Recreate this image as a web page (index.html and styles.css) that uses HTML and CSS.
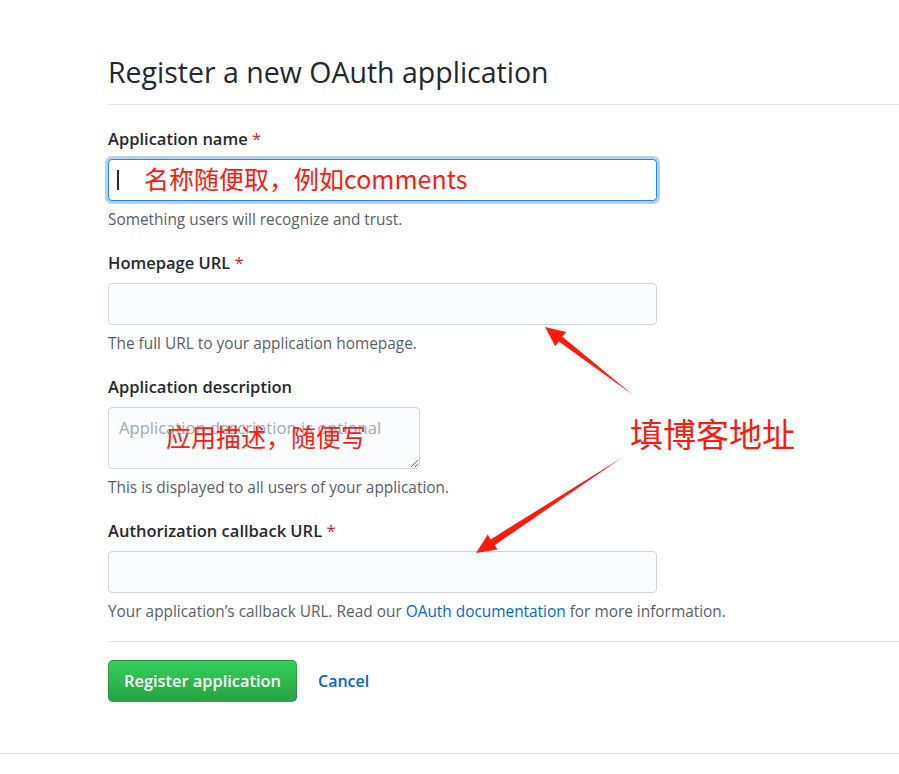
FILE: index.html
```html
<!DOCTYPE html>
<html lang="en">
<head>
<meta charset="utf-8">
<title>Register a new OAuth application</title>
<link rel="stylesheet" href="styles.css">
</head>
<body>
<div class="page">
  <main class="main">
    <div class="subhead">
      <h2 class="subhead-heading">Register a new OAuth application</h2>
    </div>
    <form class="form">
      <div class="form-group">
        <label class="label">Application name <span class="req">*</span></label>
        <div class="input input-focus">
          <span class="caret"></span>
          <span class="note-red">名称随便取，例如comments</span>
        </div>
        <p class="note">Something users will recognize and trust.</p>
      </div>
      <div class="form-group">
        <label class="label">Homepage URL <span class="req">*</span></label>
        <input class="input" type="text">
        <p class="note">The full URL to your application homepage.</p>
      </div>
      <div class="form-group">
        <label class="label">Application description</label>
        <div class="textarea-wrap">
          <textarea class="textarea" placeholder="Application description is optional"></textarea>
          <span class="textarea-annot">应用描述，随便写</span>
        </div>
        <p class="note">This is displayed to all users of your application.</p>
      </div>
      <div class="form-group form-group-last">
        <label class="label">Authorization callback URL <span class="req">*</span></label>
        <input class="input" type="text">
        <p class="note">Your application’s callback URL. Read our <a class="link" href="#">OAuth documentation</a> for more information.</p>
      </div>
      <div class="form-actions">
        <button class="btn-primary" type="button">Register application</button>
        <a class="btn-link" href="#">Cancel</a>
      </div>
    </form>
  </main>
  <footer class="footer"></footer>

  <div class="callout">填博客地址</div>
  <svg class="arrows" width="899" height="774" viewBox="0 0 899 774">
    <polygon fill="#ff1a0f" points="545,327 566.3,332.1 562.2,336.6 633,395 558.8,341.4 555.3,346.3"/>
    <polygon fill="#ff1a0f" points="476,553 487.8,534.6 490.6,539.4 623,457 494.6,545.2 497.6,549.6"/>
  </svg>
</div>
</body>
</html>
```
FILE: styles.css
```css
* { box-sizing: border-box; }
html, body { margin: 0; padding: 0; background: #fff; }
body {
  font-family: "Open Sans", "Noto Sans", "Liberation Sans", sans-serif;
  color: #24292e;
  width: 899px;
  height: 774px;
  overflow: hidden;
}
.page { position: relative; width: 899px; height: 774px; }

.main { padding-left: 108px; padding-top: 52px; }

.subhead {
  border-bottom: 1px solid #e1e4e8;
  height: 53px;
}
.subhead-heading {
  margin: 0;
  font-size: 28.5px;
  font-weight: 400;
  line-height: 40px;
  color: #24292e;
}

.form { padding-top: 21px; }
.form-group { margin-bottom: 20px; }
.form-group-last { margin-bottom: 19px; }

.label {
  display: block;
  height: 25px;
  line-height: 25.5px;
  font-size: 16.5px;
  font-weight: 600;
  color: #24292e;
  margin-bottom: 8px;
}
.req { color: #cb2431; font-weight: 400; }

.input {
  display: block;
  width: 549px;
  height: 42px;
  margin: 0;
  padding: 0 8px;
  background: #fafbfc;
  border: 1px solid #d1d5da;
  border-radius: 4px;
  font-family: inherit;
  font-size: 16px;
  outline: none;
}
.input-focus {
  display: flex;
  align-items: center;
  background: #fff;
  border-color: #2188ff;
  box-shadow: 0 0 0 3px rgba(3, 102, 214, 0.3);
}
.caret {
  display: block;
  width: 2px;
  height: 20px;
  background: #24292e;
}
.note-red {
  margin-left: 25px;
  margin-top: -4px;
  font-family: "Noto Sans CJK SC", "Noto Sans", sans-serif;
  font-size: 25px;
  line-height: 30px;
  color: #ff1a0f;
}

.note {
  margin: 9px 0 0;
  font-size: 15.4px;
  line-height: 20px;
  color: #586069;
}
.link { color: #0366d6; text-decoration: none; }

.textarea-wrap { position: relative; width: 312px; }
.textarea {
  display: block;
  width: 312px;
  height: 62px;
  margin: 0;
  padding: 9px 10px;
  background: #fafbfc;
  border: 1px solid #d1d5da;
  border-radius: 4px;
  font-family: inherit;
  font-size: 16.6px;
  line-height: 22px;
  color: #24292e;
  outline: none;
}
.textarea::placeholder { color: #a3aab1; }
.textarea-annot {
  position: absolute;
  left: 58px;
  top: 15px;
  font-family: "Noto Sans CJK SC", "Noto Sans", sans-serif;
  font-size: 25px;
  line-height: 28px;
  color: #ff1a0f;
  white-space: nowrap;
}

.form-actions {
  border-top: 1px solid #e1e4e8;
  padding-top: 18px;
  display: flex;
  align-items: flex-start;
  gap: 21px;
  height: 112px;
}
.btn-primary {
  width: 189px;
  height: 42px;
  padding: 0;
  border: 1px solid rgba(27, 31, 35, 0.2);
  border-radius: 5px;
  background: linear-gradient(#34d058, #28a745 90%);
  color: #fff;
  font-family: inherit;
  font-size: 16.4px;
  font-weight: 600;
  line-height: 40px;
}
.btn-link {
  color: #0366d6;
  text-decoration: none;
  font-size: 16px;
  font-weight: 600;
  line-height: 42px;
}

.footer {
  border-top: 1px solid #e1e4e8;
  height: 21px;
}

.callout {
  position: absolute;
  left: 630px;
  top: 417px;
  font-family: "Noto Sans CJK SC", "Noto Sans", sans-serif;
  font-size: 33px;
  line-height: 33px;
  color: #ff1a0f;
  white-space: nowrap;
}
.arrows { position: absolute; left: 0; top: 0; pointer-events: none; }
```
